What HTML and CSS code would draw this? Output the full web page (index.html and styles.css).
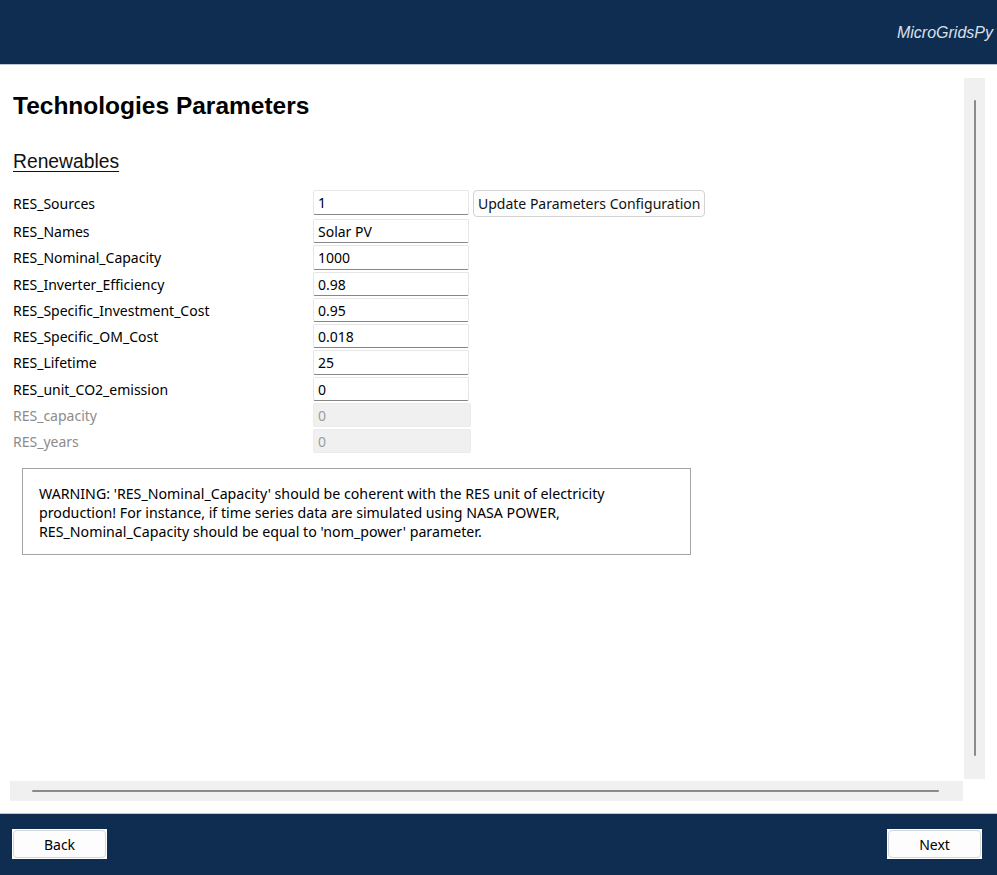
FILE: index.html
```html
<!DOCTYPE html>
<html lang="en">
<head>
<meta charset="utf-8">
<title>MicroGridsPy - Technologies Parameters</title>
<link rel="stylesheet" href="styles.css">
</head>
<body>
<div class="app">
  <header class="topbar">
    <span class="brand">MicroGridsPy</span>
  </header>
  <main class="main">
    <div class="scrollarea">
      <div class="viewport">
        <h1 class="title">Technologies Parameters</h1>
        <h2 class="section">Renewables</h2>
        <div class="form">
          <div class="row first">
            <label class="lbl">RES_Sources</label>
            <div class="field">1</div>
            <button class="update-btn">Update Parameters Configuration</button>
          </div>
          <div class="row">
            <label class="lbl">RES_Names</label>
            <div class="field">Solar PV</div>
          </div>
          <div class="row">
            <label class="lbl">RES_Nominal_Capacity</label>
            <div class="field">1000</div>
          </div>
          <div class="row">
            <label class="lbl">RES_Inverter_Efficiency</label>
            <div class="field">0.98</div>
          </div>
          <div class="row">
            <label class="lbl">RES_Specific_Investment_Cost</label>
            <div class="field">0.95</div>
          </div>
          <div class="row">
            <label class="lbl">RES_Specific_OM_Cost</label>
            <div class="field">0.018</div>
          </div>
          <div class="row">
            <label class="lbl">RES_Lifetime</label>
            <div class="field">25</div>
          </div>
          <div class="row">
            <label class="lbl">RES_unit_CO2_emission</label>
            <div class="field">0</div>
          </div>
          <div class="row disabled">
            <label class="lbl">RES_capacity</label>
            <div class="field">0</div>
          </div>
          <div class="row disabled">
            <label class="lbl">RES_years</label>
            <div class="field">0</div>
          </div>
        </div>
        <div class="warning">WARNING: 'RES_Nominal_Capacity' should be coherent with the RES unit of electricity<br>production! For instance, if time series data are simulated using NASA POWER,<br>RES_Nominal_Capacity should be equal to 'nom_power' parameter.</div>
      </div>
      <div class="vscroll"><div class="vhandle"></div></div>
      <div class="hscroll"><div class="hhandle"></div></div>
    </div>
  </main>
  <footer class="bottombar">
    <div class="btn-frame"><button class="nav-btn">Back</button></div>
    <div class="btn-frame"><button class="nav-btn">Next</button></div>
  </footer>
</div>
</body>
</html>
```

FILE: styles.css
```css
* { box-sizing: border-box; }

html, body {
  margin: 0;
  padding: 0;
  background: #ffffff;
}

body {
  font-family: "Noto Sans", "Open Sans", sans-serif;
  font-size: 14px;
  color: #000;
}

.app {
  width: 997px;
  height: 875px;
  display: flex;
  flex-direction: column;
  overflow: hidden;
}

.topbar {
  height: 65px;
  flex: 0 0 65px;
  background: #0f2c51;
  border-bottom: 1px solid #b9c6d6;
  display: flex;
  justify-content: flex-end;
  align-items: flex-start;
  padding: 24px 4px 0 0;
}

.brand {
  font-family: "Liberation Sans", Arial, sans-serif;
  font-style: italic;
  font-size: 16px;
  line-height: 18px;
  color: #d9e0ea;
}

.main {
  flex: 1 1 auto;
  padding: 13px 12px 12px 10px;
  background: #fff;
}

.scrollarea {
  display: grid;
  grid-template-columns: 954px 21px;
  grid-template-rows: 703px 20px;
}

.viewport {
  grid-column: 1;
  grid-row: 1;
  padding: 14px 0 0 3px;
  background: #fff;
  overflow: hidden;
}

.title {
  margin: 0;
  font-family: "Liberation Sans", Arial, sans-serif;
  font-weight: bold;
  font-size: 24.5px;
  line-height: 28px;
  color: #000;
}

.section {
  margin: 30px 0 0 0;
  font-family: "Liberation Sans", Arial, sans-serif;
  font-weight: normal;
  font-size: 19.3px;
  line-height: 23px;
  text-decoration: underline;
  text-underline-offset: 3px;
  text-decoration-thickness: 1px;
  color: #111;
  display: inline-block;
}

.form {
  margin-top: 17px;
  display: flex;
  flex-direction: column;
  gap: 2px;
}

.row {
  display: flex;
  align-items: center;
  height: 24.25px;
}

.row.first {
  height: 27px;
  align-items: flex-start;
}

.row.first .lbl {
  align-self: center;
  padding-top: 0;
}

.lbl {
  width: 300px;
  flex: 0 0 300px;
  white-space: nowrap;
  line-height: 18px;
  padding-top: 2px;
  color: #000;
}

.field {
  width: 156px;
  height: 24.25px;
  flex: 0 0 156px;
  background: #fff;
  border: 1px solid #e6e6e6;
  border-bottom: 1px solid #878787;
  border-radius: 2px;
  padding: 1px 4px 0;
  line-height: 22px;
  color: #000;
}

.row.first .field {
  height: 25px;
}

.row.disabled .lbl {
  color: #8c8c8c;
}

.row.disabled .field {
  width: 158px;
  flex-basis: 158px;
  background: #f0f0f0;
  border: 1px solid #ebebeb;
  color: #9c9c9c;
}

.update-btn {
  margin-left: 4px;
  height: 27px;
  padding: 0 4px;
  font-family: "Noto Sans", "Open Sans", sans-serif;
  font-size: 14px;
  color: #111;
  background: #fdfdfd;
  border: 1px solid #d3d3d3;
  border-radius: 4px;
  line-height: 25px;
}

.warning {
  margin: 14.75px 0 0 9px;
  width: 669px;
  height: 87px;
  border: 1px solid #a3a3a3;
  padding: 15px 0 0 16px;
  white-space: nowrap;
  line-height: 19px;
  font-size: 14.2px;
  color: #000;
}

.vscroll {
  grid-column: 2;
  grid-row: 1;
  height: 701px;
  background: #f0f0f0;
  padding: 22px 9px 23px 10px;
}

.vhandle {
  width: 2px;
  height: 100%;
  background: #8a8a8a;
  border-radius: 1px;
}

.hscroll {
  grid-column: 1;
  grid-row: 2;
  width: 953px;
  background: #f0f0f0;
  padding: 9px 24px 9px 22px;
}

.hhandle {
  height: 2px;
  width: 100%;
  background: #8a8a8a;
  border-radius: 1px;
}

.bottombar {
  height: 62px;
  flex: 0 0 62px;
  background: #0f2c51;
  border-top: 1px solid #b9c6d6;
  display: flex;
  justify-content: space-between;
  align-items: flex-start;
  padding: 15px 15px 0 12px;
}

.btn-frame {
  background: #fff;
  padding: 1px;
  width: 95px;
  height: 30px;
}

.nav-btn {
  width: 100%;
  height: 100%;
  font-family: "Noto Sans", "Open Sans", sans-serif;
  font-size: 14px;
  color: #000;
  background: #fdfdfd;
  border: 1px solid #d6d6d6;
  border-radius: 4px;
  padding: 0;
}
```
